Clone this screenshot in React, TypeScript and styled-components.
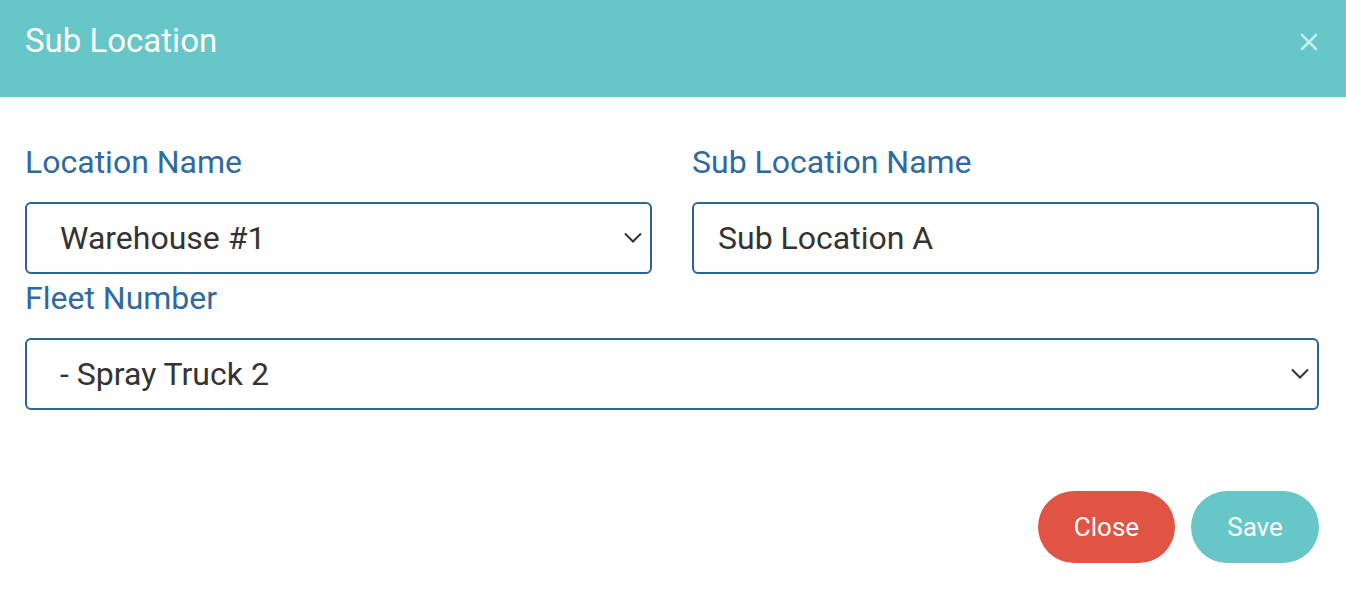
import React from 'react';
import styled, { createGlobalStyle } from 'styled-components';

const GlobalStyle = createGlobalStyle`
  body {
    margin: 0;
    background: #fff;
    font-family: Roboto, "Liberation Sans", sans-serif;
  }
`;

const Modal = styled.div`
  width: 1346px;
  height: 596px;
  background: #fff;
  display: flex;
  flex-direction: column;
`;

const Header = styled.div`
  height: 97px;
  background: #67c6c8;
  display: flex;
  align-items: flex-start;
  justify-content: space-between;
  padding: 21px 25px 0 25px;
  box-sizing: border-box;
`;

const Title = styled.h2`
  margin: 0;
  font-size: 33px;
  line-height: 40px;
  font-weight: 400;
  color: #fff;
`;

const CloseX = styled.button`
  background: none;
  border: none;
  padding: 0;
  width: 24px;
  height: 24px;
  display: flex;
  align-items: center;
  justify-content: center;
  cursor: pointer;
  margin-top: 9px;
`;

const Body = styled.div`
  padding: 45px 27px 0 25px;
  display: flex;
  flex-direction: column;
`;

const Row = styled.div`
  display: grid;
  grid-template-columns: 1fr 1fr;
  column-gap: 40px;
`;

const Field = styled.div<{ $spaced?: boolean }>`
  display: flex;
  flex-direction: column;
  margin-top: ${({ $spaced }) => ($spaced ? '4px' : '0')};
`;

const Label = styled.label`
  font-size: 32px;
  color: #2e6aa0;
  line-height: 40px;
  margin-bottom: 20px;
`;

const boxStyles = `
  height: 72px;
  box-sizing: border-box;
  border: 2px solid #2e6496;
  border-radius: 6px;
  background: #fff;
  font-family: Roboto, "Liberation Sans", sans-serif;
  font-size: 32px;
  color: #333;
  width: 100%;
`;

const SelectBox = styled.div`
  ${boxStyles}
  display: flex;
  align-items: center;
  justify-content: space-between;
  padding: 0 8px 0 33px;
`;

const TextInput = styled.input`
  ${boxStyles}
  padding: 0 24px;
  outline: none;
`;

const Footer = styled.div`
  display: flex;
  justify-content: flex-end;
  gap: 16px;
  padding: 81px 27px 0 0;
`;

const PillButton = styled.button<{ $bg: string; $w: number }>`
  height: 72px;
  width: ${({ $w }) => $w}px;
  border: none;
  border-radius: 36px;
  background: ${({ $bg }) => $bg};
  color: #fff;
  font-family: Roboto, "Liberation Sans", sans-serif;
  font-size: 26px;
  padding: 0;
  cursor: pointer;
`;

const Chevron = () => (
  <svg width="18" height="12" viewBox="0 0 18 12" fill="none">
    <path d="M1 1.5 L9 9.5 L17 1.5" stroke="#333" strokeWidth="2" />
  </svg>
);

const App: React.FC = () => (
  <Modal>
    <GlobalStyle />
    <Header>
      <Title>Sub Location</Title>
      <CloseX aria-label="Close">
        <svg width="18" height="18" viewBox="0 0 18 18">
          <path d="M2 2 L16 16 M16 2 L2 16" stroke="#c6ecec" strokeWidth="2.6" strokeLinecap="round" />
        </svg>
      </CloseX>
    </Header>
    <Body>
      <Row>
        <Field>
          <Label>Location Name</Label>
          <SelectBox>
            <span>Warehouse #1</span>
            <Chevron />
          </SelectBox>
        </Field>
        <Field>
          <Label>Sub Location Name</Label>
          <TextInput defaultValue="Sub Location A" />
        </Field>
      </Row>
      <Field $spaced>
        <Label>Fleet Number</Label>
        <SelectBox>
          <span>- Spray Truck 2</span>
          <Chevron />
        </SelectBox>
      </Field>
    </Body>
    <Footer>
      <PillButton $bg="#e05444" $w={137}>Close</PillButton>
      <PillButton $bg="#67c6c8" $w={128}>Save</PillButton>
    </Footer>
  </Modal>
);

export default App;
